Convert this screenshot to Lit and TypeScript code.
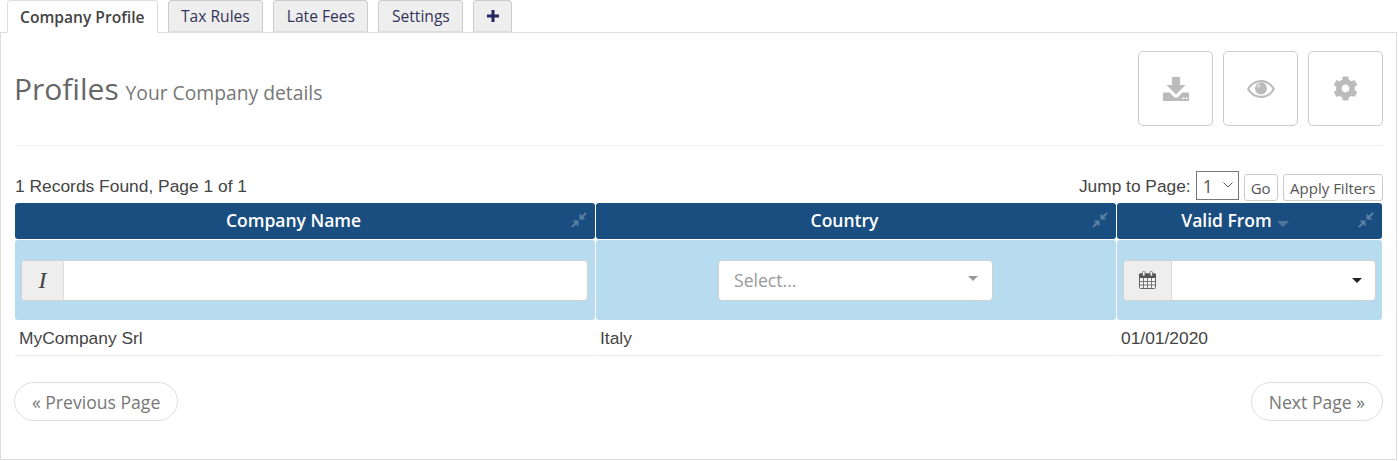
import { LitElement, html, css, svg } from "lit";
import { customElement } from "lit/decorators.js";

const pin = svg`<svg class="pin" viewBox="0 0 16 16"><path d="M8.500 1.500 10.800 3.800 14.600.2 15.800 1.400 12.200 5.200 14.500 7.500H8.500z"/><path d="M7.500 8.500V14.500L5.200 12.200 1.400 15.800.2 14.600 3.800 10.800 1.500 8.500z"/></svg>`;

@customElement("app-root")
export class AppRoot extends LitElement {
  static styles = css`
    :host { display: block; width: 1398px; height: 461px; background: #fff; font-family: "Open Sans", sans-serif; color: #666; overflow: hidden; }
    .tabs { display: flex; gap: 10px; padding-left: 7px; height: 32px; position: relative; z-index: 1; }
    .tab { height: 32px; box-sizing: border-box; padding: 0 12.500px; display: flex; align-items: center; border: 1px solid #ccc; border-bottom: 1px solid #ddd; border-radius: 4px 4px 0 0; background: #eee; color: #33335a; font-size: 15.600px; }
    .tab.active { height: 33px; padding: 0 12px; background: #fff; color: #444; font-weight: 600; border-color: #ddd; border-bottom-color: #fff; }
    .tab.plus svg { width: 12px; height: 12px; fill: #27275f; }
    .panel { box-sizing: border-box; width: 1397px; height: 428px; border: 1px solid #ddd; padding: 18px 13px 0 14px; }
    .head { display: flex; justify-content: space-between; align-items: center; padding-bottom: 19px; border-bottom: 1px solid #eee; margin-bottom: 25px; }
    .title { font-size: 30px; line-height: 40px; color: #666; padding-top: 5px; margin-left: -1px; }
    .title small { font-size: 19.300px; color: #777; margin-left: -1px; }
    .actions { display: flex; gap: 10px; }
    .action { width: 75px; height: 75px; box-sizing: border-box; border: 1px solid #ccc; border-radius: 5px; display: flex; align-items: center; justify-content: center; }
    .action svg { fill: #bbb; display: block; }
    .toolbar { display: flex; justify-content: space-between; align-items: flex-end; height: 32px; }
    .count { font-family: "Liberation Sans", sans-serif; font-size: 17.400px; line-height: 18px; color: #444; padding-bottom: 8px; }
    .jump { display: flex; align-items: flex-end; gap: 5px; font-family: "Liberation Sans", sans-serif; font-size: 17.330px; color: #444; padding-bottom: 2px; }
    .jump label { padding-bottom: 6px; line-height: 18px; }
    .pick { position: relative; display: block; width: 43px; height: 29px; margin-bottom: 1px; }
    .pick select { appearance: none; -webkit-appearance: none; width: 43px; height: 29px; box-sizing: border-box; margin: 0; border: 1px solid #767676; border-radius: 0; background: #fff; font-family: "Open Sans", sans-serif; font-size: 17.330px; color: #555; padding: 0 0 0 6px; display: block; }
    .pick svg { position: absolute; right: 6px; top: 11px; width: 10px; height: 6px; fill: none; stroke: #555; stroke-width: 1; pointer-events: none; }
    .btn { height: 27px; box-sizing: border-box; border: 1px solid #ccc; border-radius: 3px; background: #fff; font-family: "Open Sans", sans-serif; font-size: 15px; color: #555; padding: 0 6.500px; display: flex; align-items: center; }
    .btn.go { padding: 0 6px; }
    .grid { display: grid; grid-template-columns: 580px 520px 265px; column-gap: 1px; grid-template-rows: 36px 81px 35px; row-gap: 0; }
    .th { position: relative; box-sizing: border-box; background: #1a4e80; color: #fff; font-size: 17.500px; font-weight: 600; border-radius: 3px; display: flex; align-items: center; justify-content: center; gap: 5px; height: 36px; padding: 0 23px 2px 0; }
    .pin { position: absolute; right: 8px; top: 9px; width: 16px; height: 16px; fill: #5a80a3; }
    .caret { width: 0; height: 0; border-left: 6px solid transparent; border-right: 6px solid transparent; border-top: 6px solid #4e7599; margin: 7px 6px 0 0; }
    .filter { background: #b7dbef; border-radius: 3px; margin-top: 1px; display: flex; align-items: center; padding: 0 7px 0 6px; }
    .filter.mid { justify-content: center; padding: 0 3px 0 1px; }
    .filter.end { padding: 0 6px; }
    .group { display: flex; flex: 1; height: 41px; box-sizing: border-box; border: 1px solid #d0d0d0; border-radius: 4px; background: #fff; overflow: hidden; }
    .addon { width: 41px; background: #eee; border-right: 1px solid #ddd; display: flex; align-items: center; justify-content: center; flex: none; font-family: "Liberation Serif", serif; font-style: italic; font-size: 24px; color: #444; }
    .addon.date { width: 47px; }
    .addon svg { width: 17px; height: 18px; display: block; }
    .val { flex: 1; display: flex; align-items: center; justify-content: flex-end; padding-right: 13px; }
    .dark { width: 0; height: 0; border-left: 5px solid transparent; border-right: 5px solid transparent; border-top: 5px solid #222; }
    .sel { width: 275px; height: 41px; box-sizing: border-box; border: 1px solid #d0d0d0; border-radius: 4px; background: #fff; display: flex; align-items: center; justify-content: space-between; padding: 0 14px 0 15.500px; color: #999; font-size: 17.600px; }
    .sel i { width: 0; height: 0; border-left: 5px solid transparent; border-right: 5px solid transparent; border-top: 5px solid #999; margin-top: -3px; }
    .td { height: 35px; box-sizing: border-box; margin-top: 1px; border-bottom: 1px solid #e8e8e8; font-family: "Liberation Sans", sans-serif; font-size: 17.400px; color: #444; padding: 0 4px; display: flex; align-items: center; }
    .pager { display: flex; justify-content: space-between; margin: 27px 0 0 -1px; }
    .pill { height: 39px; box-sizing: border-box; border: 1px solid #ddd; border-radius: 20px; padding: 0 17px; display: flex; align-items: center; font-size: 17.600px; color: #777; }
  `;

  render() {
    return html`
      <div class="tabs">
        <div class="tab active">Company Profile</div>
        <div class="tab">Tax Rules</div>
        <div class="tab">Late Fees</div>
        <div class="tab">Settings</div>
        <div class="tab plus"><svg viewBox="0 0 12 12"><path d="M4.500 0h3v4.500H12v3H7.500V12h-3V7.500H0v-3h4.500z"/></svg></div>
      </div>
      <div class="panel">
        <div class="head">
          <div class="title">Profiles <small>Your Company details</small></div>
          <div class="actions">
            <div class="action"><svg width="26" height="24" viewBox="0 0 26 24"><path d="M9 0h8v8h5.500L13 17.500 3.500 8H9z"/><path fill-rule="evenodd" d="M0 15.500h6.500L10.500 19.500a3.500 3.500 0 0 0 5 0l4-4H26V24H0zM19.500 20.500h2v1.500h-2zM22.800 20.500h1.800v1.500h-1.800z"/></svg></div>
            <div class="action"><svg width="28" height="18" viewBox="0 0 28 18"><path fill-rule="evenodd" d="M14 0C8 0 3 3.500 0 9c3 5.500 8 9 14 9s11-3.500 14-9c-3-5.500-8-9-14-9zM14 2.200C19 2.200 23 4.800 25.600 9 23 13.200 19 15.800 14 15.800S5 13.200 2.400 9C5 4.800 9 2.200 14 2.200z"/><circle cx="14" cy="8.500" r="6"/><circle cx="11.500" cy="6" r="1.800" fill="#ddd"/></svg></div>
            <div class="action"><svg width="25" height="25" viewBox="0 0 512 512"><path d="M487.400 315.700l-42.600-24.600c4.300-23.200 4.300-47 0-70.200l42.600-24.600c4.900-2.800 7.100-8.600 5.500-14-11.100-35.600-30-67.800-54.700-94.600-3.800-4.100-10-5.100-14.800-2.300L380.800 110c-17.900-15.400-38.500-27.300-60.800-35.100V25.800c0-5.600-3.900-10.500-9.400-11.700-36.700-8.200-74.300-7.800-109.200 0-5.500 1.200-9.400 6.100-9.400 11.700V75c-22.200 7.900-42.800 19.800-60.800 35.100L88.700 85.500c-4.900-2.800-11-1.900-14.800 2.300-24.700 26.700-43.600 58.900-54.700 94.600-1.700 5.400.6 11.200 5.500 14L67.300 221c-4.300 23.200-4.300 47 0 70.200l-42.600 24.600c-4.900 2.800-7.100 8.600-5.500 14 11.100 35.600 30 67.800 54.700 94.600 3.800 4.100 10 5.100 14.800 2.300l42.600-24.600c17.900 15.400 38.500 27.300 60.800 35.100v49.200c0 5.600 3.900 10.500 9.400 11.700 36.700 8.200 74.300 7.800 109.200 0 5.500-1.200 9.400-6.100 9.400-11.700v-49.200c22.200-7.900 42.800-19.800 60.800-35.100l42.600 24.600c4.900 2.800 11 1.900 14.800-2.300 24.700-26.700 43.600-58.900 54.700-94.600 1.500-5.500-.7-11.300-5.600-14.100zM256 336c-44.100 0-80-35.900-80-80s35.900-80 80-80 80 35.900 80 80-35.900 80-80 80z"/></svg></div>
          </div>
        </div>
        <div class="toolbar">
          <div class="count">1 Records Found, Page 1 of 1</div>
          <div class="jump">
            <label>Jump to Page:</label>
            <span class="pick"><select><option>1</option></select><svg viewBox="0 0 10 6"><path d="M.5.500 5 5 9.500.5"/></svg></span>
            <div class="btn go">Go</div>
            <div class="btn">Apply Filters</div>
          </div>
        </div>
        <div class="grid">
          <div class="th">Company Name${pin}</div>
          <div class="th">Country${pin}</div>
          <div class="th">Valid From<span class="caret"></span>${pin}</div>
          <div class="filter">
            <div class="group"><div class="addon">I</div><div class="val"></div></div>
          </div>
          <div class="filter mid">
            <div class="sel">Select...<i></i></div>
          </div>
          <div class="filter end">
            <div class="group"><div class="addon date"><svg viewBox="0 0 17 18"><rect x="0.500" y="3" width="16" height="14.500" rx="1" fill="#f4f4f4" stroke="#666"/><rect x="0" y="2.500" width="17" height="4.500" rx="1" fill="#555"/><rect x="3.500" y="0.500" width="2.500" height="4.500" rx="1" fill="#f4f4f4" stroke="#666" stroke-width=".8"/><rect x="11" y="0.500" width="2.500" height="4.500" rx="1" fill="#f4f4f4" stroke="#666" stroke-width=".8"/><path d="M4.500 7v10M8.500 7v10M12.500 7v10M1 10.500h15M1 14h15" stroke="#777" stroke-width="1" fill="none"/></svg></div><div class="val"><span class="dark"></span></div></div>
          </div>
          <div class="td">MyCompany Srl</div>
          <div class="td">Italy</div>
          <div class="td">01/01/2020</div>
        </div>
        <div class="pager">
          <div class="pill">« Previous Page</div>
          <div class="pill">Next Page »</div>
        </div>
      </div>
    `;
  }
}
